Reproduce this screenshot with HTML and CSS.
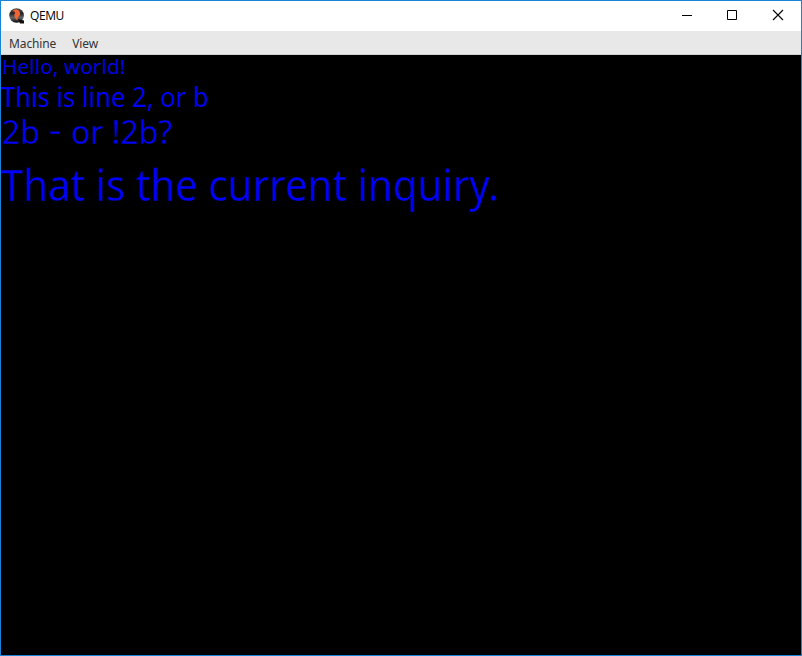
FILE: index.html
```html
<!DOCTYPE html>
<html lang="en">
<head>
<meta charset="utf-8">
<title>QEMU</title>
<link rel="stylesheet" href="styles.css">
</head>
<body>
<div class="window">
  <header class="titlebar">
    <svg class="logo" width="16" height="16" viewBox="0 0 16 16">
      <defs><linearGradient id="ball" x1="0" y1="0" x2="0" y2="1"><stop offset="0" stop-color="#555"/><stop offset=".35" stop-color="#222"/><stop offset=".65" stop-color="#666"/><stop offset="1" stop-color="#050505"/></linearGradient></defs>
      <circle cx="7.6" cy="7.5" r="7.3" fill="url(#ball)"/>
      <path d="M9 11L15 12.5L15 15.5H11Z" fill="#111"/>
      <path d="M3.5 3.2C5 1 9 .8 10.5 3.5C12 6 10.5 8 8.8 9.5L8.2 12.5C7 11 5.3 9.5 5.3 7L6.2 4.4Z" fill="#f26430"/>
      <path d="M3.6 3.4L6 3.8L4.8 5.6Z" fill="#5c1f0b"/>
    </svg>
    <h1 class="title">QEMU</h1>
    <div class="controls">
      <svg width="46" height="30" viewBox="0 0 46 30"><path d="M19 14.5H29"/></svg>
      <svg width="46" height="30" viewBox="0 0 46 30"><path d="M18.5 9.5H27.5V18.5H18.5Z"/></svg>
      <svg width="46" height="30" viewBox="0 0 46 30"><path class="cross" d="M18 9L28 19M28 9L18 19"/></svg>
    </div>
  </header>
  <nav class="menubar"><span class="machine">Machine</span><span class="view">View</span></nav>
  <main class="screen">
    <p class="hello">Hello, world!</p>
    <p class="second">This is line 2, or b</p>
    <p class="third">2b <span class="dash">-</span> or !2b?</p>
    <p class="fourth">That is the current inquiry.</p>
  </main>
</div>
</body>
</html>
```
FILE: styles.css
```css
* { box-sizing: border-box; }
body { margin: 0; }
.window {
  width: 802px; height: 656px;
  display: flex; flex-direction: column;
  border: 1px solid #1883d7;
  background: #000;
  overflow: hidden;
}
.titlebar { flex: none; height: 30px; display: flex; align-items: center; background: #fff; padding-left: 8px; }
.logo { margin-right: 5px; }
.title { margin: 0; font: 400 12px/30px "Open Sans", sans-serif; color: #000; letter-spacing: -.4px; }
.controls { display: flex; margin-left: auto; }
.controls svg { display: block; }
.controls path { fill: none; stroke: #000; stroke-width: 1; }
.controls .cross { stroke-width: 1.1; }
.menubar {
  flex: none; height: 24px; display: flex; gap: 16px;
  padding-left: 8px; background: #e8e8e8;
  border-bottom: 1px solid #d0d0d0;
  font: 12px/25px "Noto Sans", sans-serif; color: #333;
  letter-spacing: -.12px;
}
.screen {
  flex: 1; color: #00f; white-space: nowrap;
  font-family: "Noto Sans", sans-serif;
}
.screen p { margin: 0; transform-origin: 0 0; }
.screen .hello { font-size: 20.5px; line-height: 22px; color: #0000e0; letter-spacing: .2px; padding-left: 1px; }
.screen .second { font-size: 26.5px; line-height: 39px; padding-top: 1px; transform: scaleX(.965); -webkit-text-stroke: .2px #000; }
.screen .third { font-size: 32px; line-height: 29px; padding-left: 1px; -webkit-text-stroke: .4px #000; }
.screen .dash { display: inline-block; transform: translate(0, -2px) scaleX(1.25); margin: 0 2px; }
.screen .fourth { font-size: 43px; line-height: 78px; transform: scaleX(.936); -webkit-text-stroke: .5px #000; }
```
